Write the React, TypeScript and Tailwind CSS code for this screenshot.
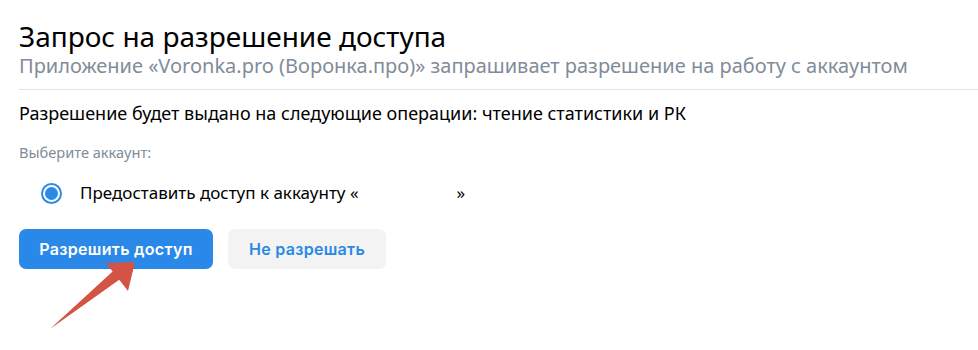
export default function App() {
  return (
    <div className="relative w-[978px] h-[350px] bg-white overflow-hidden font-['Noto_Sans','Open_Sans',sans-serif]">
      <div className="pl-[19px] pt-[20px]">
        <h1 className="text-[28px] leading-[32px] mb-[2px] text-black">Запрос на разрешение доступа</h1>
        <p className="text-[20px] leading-[24px] text-[#818c99]">
          Приложение «Voronka.pro (Воронка.про)» запрашивает разрешение на работу с аккаунтом
        </p>
      </div>
      <div className="ml-[19px] mt-[11px] h-px bg-[#e1e3e6]" />

      <div className="pl-[19px] pt-[11px]">
        <p className="text-[18px] leading-[24px] text-black">
          Разрешение будет выдано на следующие операции: чтение статистики и РК
        </p>
        <p className="mt-[18px] text-[14.6px] leading-[18px] text-[#818c99]">Выберите аккаунт:</p>

        <label className="mt-[20px] ml-[22px] flex items-center gap-[18px]">
          <span className="w-[21px] h-[21px] rounded-full border-2 border-[#2a8ae6] flex items-center justify-center">
            <span className="w-[13px] h-[13px] rounded-full bg-[#2a8ae6]" />
          </span>
          <span className="text-[17px] leading-[24px] text-black">
            Предоставить доступ к аккаунту «<span className="inline-block w-[98px]" />»
          </span>
        </label>

        <div className="mt-[24px] flex gap-[15px] font-['Inter',sans-serif] font-semibold text-[16px] tracking-[0.3px]">
          <button className="w-[194px] h-[40px] rounded-[7px] bg-[#2a88e8] text-white">Разрешить доступ</button>
          <button className="w-[158px] h-[40px] rounded-[7px] bg-[#f3f3f3] text-[#2a88e4]">Не разрешать</button>
        </div>
      </div>

      <svg className="absolute left-0 top-0" width="978" height="350" viewBox="0 0 978 350">
        <polygon
          points="50,329 112.6,271.4 106,263 135,262 128,291 119.2,279.8"
          fill="#d35444"
        />
      </svg>
    </div>
  );
}
